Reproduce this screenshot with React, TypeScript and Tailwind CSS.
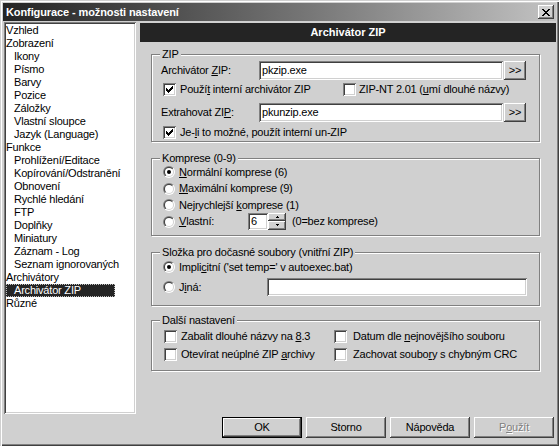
import React from 'react';

const tree: [string, number][] = [
  ['Vzhled', 0],
  ['Zobrazení', 0],
  ['Ikony', 1],
  ['Písmo', 1],
  ['Barvy', 1],
  ['Pozice', 1],
  ['Záložky', 1],
  ['Vlastní sloupce', 1],
  ['Jazyk (Language)', 1],
  ['Funkce', 0],
  ['Prohlížení/Editace', 1],
  ['Kopírování/Odstranění', 1],
  ['Obnovení', 1],
  ['Rychlé hledání', 1],
  ['FTP', 1],
  ['Doplňky', 1],
  ['Miniatury', 1],
  ['Záznam - Log', 1],
  ['Seznam ignorovaných', 1],
  ['Archivátory', 0],
  ['Archivátor ZIP', 1],
  ['Různé', 0],
];

const raised =
  'bg-[#d0d0d0] shadow-[inset_-1px_-1px_#404040,inset_1px_1px_#fff,inset_-2px_-2px_#808080]';
const sunken =
  'bg-white shadow-[inset_1px_1px_#808080,inset_-1px_-1px_#fff,inset_2px_2px_#404040,inset_-2px_-2px_#d0d0d0]';

function U({ children }: { children: React.ReactNode }) {
  return <span className="underline decoration-1 underline-offset-[1px]">{children}</span>;
}

function Check({ checked = false }: { checked?: boolean }) {
  // pixel check mark, columns of 3px
  const cols = [
    [3, 5], [4, 6], [5, 7], [6, 6], [7, 5], [8, 4], [9, 3],
  ];
  return (
    <span className={`relative inline-block w-[13px] h-[13px] shrink-0 ${sunken}`}>
      {checked && (
        <svg width="13" height="13" className="absolute left-0 top-0" shapeRendering="crispEdges">
          {cols.map(([x, y]) => (
            <rect key={x} x={x} y={y} width="1" height="3" fill="#000" />
          ))}
        </svg>
      )}
    </span>
  );
}

function Radio({ checked = false }: { checked?: boolean }) {
  return (
    <svg width="12" height="12" className="shrink-0">
      <defs>
        <linearGradient id="rOut" x1="0" y1="0" x2="1" y2="1">
          <stop offset="0.5" stopColor="#808080" />
          <stop offset="0.5" stopColor="#ffffff" />
        </linearGradient>
        <linearGradient id="rIn" x1="0" y1="0" x2="1" y2="1">
          <stop offset="0.5" stopColor="#404040" />
          <stop offset="0.5" stopColor="#d0d0d0" />
        </linearGradient>
      </defs>
      <circle cx="6" cy="6" r="6" fill="url(#rOut)" />
      <circle cx="6" cy="6" r="5" fill="url(#rIn)" />
      <circle cx="6" cy="6" r="4" fill="#fff" />
      {checked && <circle cx="6" cy="6" r="2" fill="#000" />}
    </svg>
  );
}

function Group({
  label,
  className,
  children,
}: {
  label: string;
  className: string;
  children: React.ReactNode;
}) {
  return (
    <div
      className={`relative border border-[#808080] shadow-[inset_1px_1px_#fff,1px_1px_#fff] ${className}`}
    >
      <span className="absolute left-[8px] -top-[7px] bg-[#d0d0d0] px-[2px] leading-[13px]">
        {label}
      </span>
      {children}
    </div>
  );
}

function Button({
  children,
  isDefault = false,
  disabled = false,
}: {
  children: React.ReactNode;
  isDefault?: boolean;
  disabled?: boolean;
}) {
  return (
    <div
      className={`w-[80px] h-[21px] ${isDefault ? 'border border-black' : ''} flex`}
    >
      <div
        className={`flex-1 flex items-center justify-center ${raised} ${
          disabled ? 'text-[#808080] [text-shadow:1px_1px_0_#fff]' : ''
        }`}
      >
        {children}
      </div>
    </div>
  );
}

export default function App() {
  return (
    <div className="w-[559px] h-[446px] p-[3px] bg-[#d0d0d0] text-black text-[11px] leading-[13px] tracking-[-0.2px] font-['Liberation_Sans',Arial,sans-serif] shadow-[inset_1px_1px_#d0d0d0,inset_2px_2px_#fff,inset_-1px_-1px_#404040,inset_-2px_-2px_#808080] overflow-hidden">
      {/* Title bar */}
      <div className="h-[18px] flex items-center justify-between pl-[3px] pr-[2px] bg-gradient-to-r from-[#242424] to-[#c3c3c3]">
        <span className="text-white font-bold text-[11px] tracking-[-0.1px]">
          Konfigurace - možnosti nastavení
        </span>
        <div className={`w-[16px] h-[14px] flex items-center justify-center ${raised}`}>
          <svg width="8" height="7" shapeRendering="crispEdges">
            {[0, 1, 2, 3, 4, 5, 6].map((i) => (
              <g key={i}>
                <rect x={i * 1} y={i} width="2" height="1" fill="#000" />
                <rect x={6 - i} y={i} width="2" height="1" fill="#000" />
              </g>
            ))}
          </svg>
        </div>
      </div>

      {/* Body */}
      <div className="mt-[1px] flex">
        <div className={`ml-[1px] w-[132px] h-[392px] p-[2px] ${sunken}`}>
          {tree.map(([name, lvl]) => {
            const sel = name === 'Archivátor ZIP';
            return (
              <div key={name} className="h-[13px] flex">
                <span
                  className={
                    sel
                      ? 'w-[109px] pl-[8px] bg-[#242424] text-white outline outline-1 outline-dotted outline-[#c0c0c0] -outline-offset-1'
                      : lvl
                      ? 'pl-[8px]'
                      : ''
                  }
                >
                  {name}
                </span>
              </div>
            );
          })}
        </div>

        <div className="ml-[4px] w-[416px] flex flex-col">
          <div className="mt-[1px] h-[19px] bg-[#242424] text-white font-bold tracking-normal flex items-center justify-center">
            Archivátor ZIP
          </div>

          <div className="ml-[11px] w-[389px] flex flex-col">
            {/* ZIP */}
            <Group label="ZIP" className="mt-[12px] h-[88px]">
              <div className="pt-[6px] pl-[9px] flex flex-col">
                <div className="flex items-center h-[19px]">
                  <span className="w-[98px]">
                    Archivátor <U>Z</U>IP:
                  </span>
                  <div className={`w-[244px] h-[19px] pl-[3px] flex items-center ${sunken}`}>
                    pkzip.exe
                  </div>
                  <div className={`ml-[1px] w-[22px] h-[19px] flex items-center justify-center ${raised}`}>
                    &gt;&gt;
                  </div>
                </div>
                <div className="mt-[3px] h-[13px] pl-[2px] flex items-center">
                  <div className="w-[180px] flex items-center">
                    <Check checked />
                    <span className="ml-[4px]">
                      Použí<U>t</U> interní archivátor ZIP
                    </span>
                  </div>
                  <Check />
                  <span className="ml-[3px]">
                    ZIP-NT 2.01 (<U>u</U>mí dlouhé názvy)
                  </span>
                </div>
                <div className="mt-[7px] flex items-center h-[19px]">
                  <span className="w-[98px]">
                    Extrahovat ZI<U>P</U>:
                  </span>
                  <div className={`w-[244px] h-[19px] pl-[3px] flex items-center ${sunken}`}>
                    pkunzip.exe
                  </div>
                  <div className={`ml-[1px] w-[22px] h-[19px] flex items-center justify-center ${raised}`}>
                    &gt;&gt;
                  </div>
                </div>
                <div className="mt-[4px] h-[13px] pl-[2px] flex items-center">
                  <Check checked />
                  <span className="ml-[4px]">
                    Je-<U>l</U>i to možné, použít interní un-ZIP
                  </span>
                </div>
              </div>
            </Group>

            {/* Komprese */}
            <Group label="Komprese (0-9)" className="mt-[16px] h-[78px]">
              <div className="pt-[5px] pl-[11px] flex flex-col">
                <div className="h-[16px] flex items-center">
                  <Radio checked />
                  <span className="ml-[4px]">
                    <U>N</U>ormální komprese (6)
                  </span>
                </div>
                <div className="h-[17px] flex items-center">
                  <Radio />
                  <span className="ml-[4px]">
                    <U>M</U>aximální komprese (9)
                  </span>
                </div>
                <div className="h-[16px] flex items-center">
                  <Radio />
                  <span className="ml-[4px]">
                    Nejrychlejší <U>k</U>omprese (1)
                  </span>
                </div>
                <div className="h-[17px] flex items-center">
                  <Radio />
                  <span className="ml-[4px] w-[69px]">
                    <U>V</U>lastní:
                  </span>
                  <div className={`w-[20px] h-[17px] pl-[3px] flex items-center ${sunken}`}>6</div>
                  <div className="w-[18px] h-[17px] flex flex-col">
                    <div className={`h-[8px] flex items-center justify-center ${raised}`}>
                      <svg width="5" height="3" shapeRendering="crispEdges">
                        <rect x="2" y="0" width="1" height="1" fill="#000" />
                        <rect x="1" y="1" width="3" height="1" fill="#000" />
                      </svg>
                    </div>
                    <div className={`h-[9px] flex items-center justify-center ${raised}`}>
                      <svg width="5" height="3" shapeRendering="crispEdges">
                        <rect x="1" y="0" width="3" height="1" fill="#000" />
                        <rect x="2" y="1" width="1" height="1" fill="#000" />
                      </svg>
                    </div>
                  </div>
                  <span className="ml-[6px]">(0=bez komprese)</span>
                </div>
              </div>
            </Group>

            {/* Složka */}
            <Group label="Složka pro dočasné soubory (vnitřní ZIP)" className="mt-[16px] h-[54px]">
              <div className="pt-[7px] pl-[11px] flex flex-col">
                <div className="h-[14px] flex items-center">
                  <Radio checked />
                  <span className="ml-[4px]">
                    Impli<U>c</U>itní ('set temp=' v autoexec.bat)
                  </span>
                </div>
                <div className="mt-[4px] h-[18px] flex items-center">
                  <Radio />
                  <span className="ml-[4px] w-[88px]">
                    J<U>i</U>ná:
                  </span>
                  <div className={`w-[260px] h-[18px] ${sunken}`} />
                </div>
              </div>
            </Group>

            {/* Další nastavení */}
            <Group label="Další nastavení" className="mt-[14px] h-[51px]">
              <div className="pt-[8px] pl-[12px] flex flex-col">
                <div className="h-[14px] flex items-center">
                  <div className="w-[170px] flex items-center">
                    <Check />
                    <span className="ml-[4px]">
                      Zabalit dlouhé názvy na <U>8</U>.3
                    </span>
                  </div>
                  <Check />
                  <span className="ml-[6px]">
                    Datum dle <U>n</U>ejnovějšího souboru
                  </span>
                </div>
                <div className="mt-[4px] h-[14px] flex items-center">
                  <div className="w-[170px] flex items-center">
                    <Check />
                    <span className="ml-[4px]">
                      Otevírat neúplné ZIP <U>a</U>rchivy
                    </span>
                  </div>
                  <Check />
                  <span className="ml-[6px]">
                    Zachovat soubo<U>r</U>y s chybným CRC
                  </span>
                </div>
              </div>
            </Group>
          </div>
        </div>
      </div>

      {/* Buttons */}
      <div className="mt-[3px] pr-[2px] flex justify-end gap-[4px]">
        <Button isDefault>OK</Button>
        <Button>Storno</Button>
        <Button>Nápověda</Button>
        <Button disabled>
          P<U>o</U>užít
        </Button>
      </div>
    </div>
  );
}
